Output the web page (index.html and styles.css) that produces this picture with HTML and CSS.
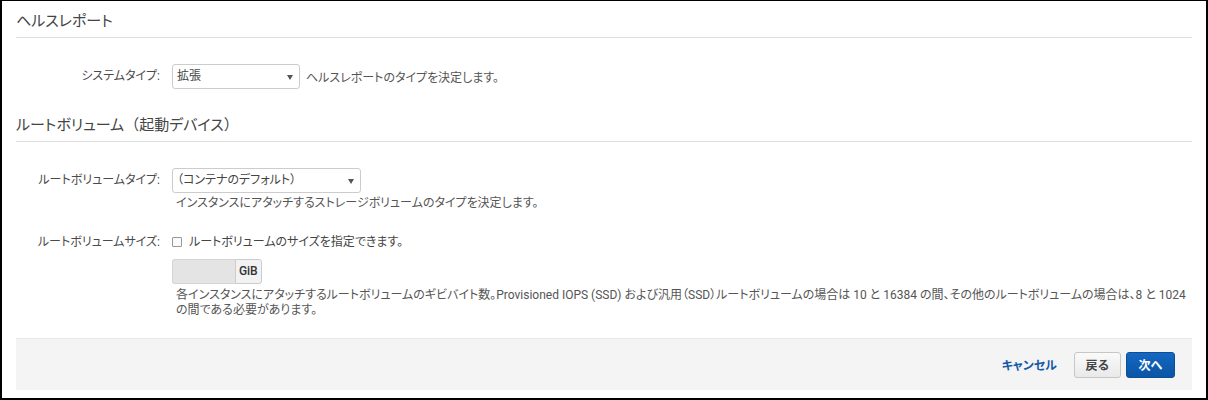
FILE: index.html
```html
<!DOCTYPE html>
<html lang="ja">
<head>
  <meta charset="UTF-8" />
  <meta name="viewport" content="width=device-width, initial-scale=1.0"/>
  <title>ヘルスレポート</title>
  <link rel="stylesheet" href="styles.css">
</head>
<body>
<div class="frame">

  <h2 class="section-title">ヘルスレポート</h2>

  <div class="form-row">
    <label class="row-label">システムタイプ:</label>
    <div class="row-field inline">
      <div class="select small">拡張<span class="caret"></span></div>
      <span class="hint">ヘルスレポートのタイプを決定します。</span>
    </div>
  </div>

  <h2 class="section-title next">ルートボリューム<span class="full">（</span>起動デバイス<span class="full">）</span></h2>

  <div class="form-row">
    <label class="row-label">ルートボリュームタイプ:</label>
    <div class="row-field">
      <div class="select wide">（コンテナのデフォルト）<span class="caret"></span></div>
      <p class="help">インスタンスにアタッチするストレージボリュームのタイプを決定します。</p>
    </div>
  </div>

  <div class="form-row spaced">
    <label class="row-label">ルートボリュームサイズ:</label>
    <div class="row-field">
      <div class="check-line"><span class="checkbox"></span>ルートボリュームのサイズを指定できます。</div>
      <div class="input-group">
        <span class="input-box"></span><span class="addon">GiB</span>
      </div>
      <p class="help block">各インスタンスにアタッチするルートボリュームのギビバイト数。Provisioned IOPS (SSD) および汎用（SSD）ルートボリュームの場合は 10 と 16384 の間、その他のルートボリュームの場合は、8 と 1024 の間である必要があります。</p>
    </div>
  </div>

  <div class="footer">
    <a class="link-btn">キャンセル</a>
    <button class="btn">戻る</button>
    <button class="btn primary">次へ</button>
  </div>

</div>
</body>
</html>
```

FILE: styles.css
```css
html, body {
  margin: 0;
  background: #fff;
}
body {
  font-family: Roboto, "Noto Sans CJK JP", sans-serif;
  font-size: 12px;
  color: #444;
  font-feature-settings: "palt";
}
.full {
  font-feature-settings: normal;
}
.frame {
  height: 400px;
  box-sizing: border-box;
  border: 2px solid #000;
  border-top-width: 1px;
  padding: 0 14px;
}
.section-title {
  margin: 0;
  padding: 10px 0 5px;
  line-height: 21px;
  font-size: 15px;
  font-weight: normal;
  color: #444;
  border-bottom: 1px solid #ddd;
}
.section-title.next {
  margin-top: 16px;
}
.form-row {
  display: flex;
  margin-top: 26px;
}
.form-row.spaced {
  margin-top: 23px;
}
.row-label {
  width: 144px;
  flex: none;
  text-align: right;
  line-height: 25px;
  margin-right: 12px;
  color: #4a4a4a;
}
.form-row.spaced .row-label {
  line-height: 16px;
}
.row-field {
  flex: 1;
}
.row-field.inline {
  display: flex;
  align-items: center;
}
.select {
  position: relative;
  box-sizing: border-box;
  height: 25px;
  line-height: 23px;
  padding-left: 4px;
  border: 1px solid #ccc;
  border-radius: 3px;
  background: #fff;
  color: #444;
}
.select.small { width: 128px; }
.select.wide { width: 189px; }
.caret {
  position: absolute;
  right: 6px;
  top: 10px;
  border-left: 3px solid transparent;
  border-right: 3px solid transparent;
  border-top: 5px solid #555;
}
.hint {
  margin-left: 6px;
  color: #555;
}
.help {
  margin: 3px 0 0 4px;
  line-height: 15px;
  color: #555;
}
.help.block {
  margin-top: 4px;
  margin-right: 6px;
}
.check-line {
  line-height: 16px;
  display: flex;
  align-items: center;
}
.checkbox {
  width: 8px;
  height: 8px;
  border: 1px solid #999;
  border-radius: 1px;
  background: #fafafa;
  margin-right: 7px;
}
.input-group {
  display: flex;
  margin-top: 9px;
  height: 25px;
  width: 90px;
}
.input-box {
  width: 63px;
  background: #e4e4e4;
  border: 1px solid #d4d4d4;
  border-right: none;
  border-radius: 3px 0 0 3px;
}
.addon {
  width: 26px;
  line-height: 23px;
  text-align: center;
  background: #f2f2f2;
  border: 1px solid #ccc;
  border-radius: 0 3px 3px 0;
  color: #333;
  font-weight: 500;
}
.footer {
  margin-top: 20px;
  height: 51px;
  box-sizing: content-box;
  background: #f4f4f4;
  border-top: 1px solid #e8e8e8;
  display: flex;
  justify-content: flex-end;
  align-items: center;
  padding-right: 17px;
}
.link-btn {
  color: #1559a9;
  font-weight: bold;
  margin-right: 17px;
  cursor: pointer;
}
.btn {
  font-family: inherit;
  font-size: 12px;
  font-weight: bold;
  height: 26px;
  width: 47px;
  padding: 0;
  border: 1px solid #c6c6c6;
  border-radius: 3px;
  background: linear-gradient(#fafafa, #e9e9e9);
  color: #444;
}
.btn.primary {
  width: 49px;
  margin-left: 5px;
  border-color: #0b4f96;
  background: linear-gradient(#1467c2, #0a55a5);
  color: #fff;
}
```
